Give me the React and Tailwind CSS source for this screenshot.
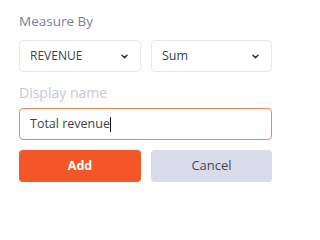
import React from "react";

function Chevron() {
  return (
    <svg width="7" height="5" viewBox="0 0 7 5" fill="none">
      <path d="M1 1.2l2.5 2.4 2.5-2.4" stroke="#2f3142" strokeWidth="1.5" strokeLinecap="round" strokeLinejoin="round" />
    </svg>
  );
}

export default function App() {
  const font = { fontFamily: '"Open Sans", "Noto Sans", sans-serif' };
  return (
    <div className="w-[318px] h-[201px] bg-white" style={font}>
      <div className="pl-[19px] pt-[12px] w-[272px] flex flex-col">
        <div className="text-[13.5px] leading-[18px] text-[#7c7f96] font-medium">Measure By</div>
        <div className="mt-[10px] flex gap-[10px]">
          <div className="w-[122px] h-[32px] border border-[#e6e7ef] rounded-[4px] flex items-center justify-between pl-[10px] pr-[12px]">
            <span className="text-[12px] text-[#3c3f52]">REVENUE</span>
            <Chevron />
          </div>
          <div className="w-[121px] h-[32px] border border-[#e6e7ef] rounded-[4px] flex items-center justify-between pl-[10px] pr-[12px]">
            <span className="text-[12.5px] text-[#3c3f52]">Sum</span>
            <Chevron />
          </div>
        </div>
        <div className="mt-[12px] text-[14px] leading-[18px] text-[#c6c8d4] font-medium">Display name</div>
        <div className="mt-[6px] h-[32px] border border-[#f0845f] rounded-[4px] flex items-center pl-[10px]">
          <span className="text-[12.5px] text-[#3c3f52]">Total revenue</span>
          <span className="w-px h-[15px] bg-[#111]" />
        </div>
        <div className="mt-[10px] flex gap-[10px]">
          <button className="w-[122px] h-[32px] rounded-[4px] bg-[#f45727] text-white text-[12.5px] font-bold">Add</button>
          <button className="w-[121px] h-[32px] rounded-[4px] bg-[#d9dce8] text-[#45485c] text-[13px]">Cancel</button>
        </div>
      </div>
    </div>
  );
}
